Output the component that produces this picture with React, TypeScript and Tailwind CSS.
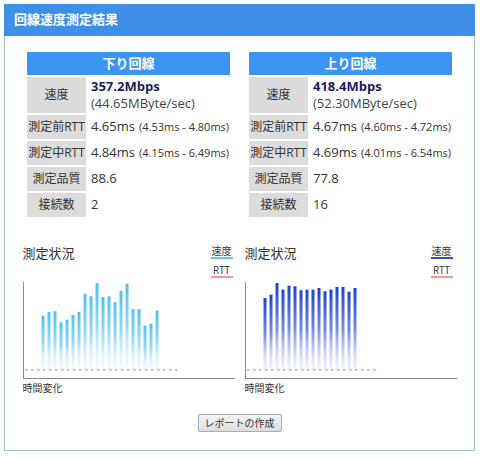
import React from "react";

const FONT = "'Open Sans', 'Noto Sans CJK JP', sans-serif";

type Side = {
  title: string;
  mbps: string;
  mbyte: string;
  rtt1: string;
  rtt1r: string;
  rtt2: string;
  rtt2r: string;
  quality: string;
  conn: string;
};

const down: Side = {
  title: "下り回線",
  mbps: "357.2Mbps",
  mbyte: "(44.65MByte/sec)",
  rtt1: "4.65ms",
  rtt1r: "(4.53ms - 4.80ms)",
  rtt2: "4.84ms",
  rtt2r: "(4.15ms - 6.49ms)",
  quality: "88.6",
  conn: "2",
};

const up: Side = {
  title: "上り回線",
  mbps: "418.4Mbps",
  mbyte: "(52.30MByte/sec)",
  rtt1: "4.67ms",
  rtt1r: "(4.60ms - 4.72ms)",
  rtt2: "4.69ms",
  rtt2r: "(4.01ms - 6.54ms)",
  quality: "77.8",
  conn: "16",
};

function Label({ children }: { children: React.ReactNode }) {
  return (
    <div className="w-[59px] shrink-0 bg-[#dcdcdc] flex items-center justify-center text-[12px] text-[#333] whitespace-nowrap overflow-visible">
      {children}
    </div>
  );
}

function Row({ label, children }: { label: string; children: React.ReactNode }) {
  return (
    <div className="flex h-[24px] gap-[2px]">
      <Label>{label}</Label>
      <div className="flex-1 flex items-center pl-[3px] text-[#333] whitespace-nowrap">{children}</div>
    </div>
  );
}

function Table({ s }: { s: Side }) {
  return (
    <div className="w-[203px] flex flex-col gap-[2px]">
      <div className="h-[23px] bg-[#3c95f2] text-white font-bold text-[13px] flex items-center justify-center">
        {s.title}
      </div>
      <div className="flex h-[36px] gap-[2px]">
        <Label>速度</Label>
        <div className="flex-1 flex flex-col justify-center pl-[3px] text-[13px] leading-[17px] whitespace-nowrap">
          <span className="font-bold text-[#1c1c5c]">{s.mbps}</span>
          <span className="text-[#444]">{s.mbyte}</span>
        </div>
      </div>
      <Row label="測定前RTT">
        <span className="text-[13px]">{s.rtt1}</span>
        <span className="text-[11px] ml-[4px]">{s.rtt1r}</span>
      </Row>
      <Row label="測定中RTT">
        <span className="text-[13px]">{s.rtt2}</span>
        <span className="text-[11px] ml-[4px]">{s.rtt2r}</span>
      </Row>
      <Row label="測定品質">
        <span className="text-[13px]">{s.quality}</span>
      </Row>
      <Row label="接続数">
        <span className="text-[13px]">{s.conn}</span>
      </Row>
    </div>
  );
}

function Chart({
  tops,
  id,
  top,
  bottom,
  legend,
  dashStart,
  dashEnd,
  legendPad,
}: {
  tops: number[];
  id: string;
  top: string;
  bottom: string;
  legend: string;
  dashStart: number;
  dashEnd: number;
  legendPad: string;
}) {
  return (
    <div className="w-[212px] flex flex-col">
      <div className="flex justify-between">
        <div className="text-[13px] leading-[16px] text-[#333]">測定状況</div>
        <div className={`flex flex-col items-end gap-[5px] ${legendPad}`}>
          <div
            className="w-[22px] text-center text-[10px] leading-[12px] text-[#333] border-b-2"
            style={{ borderColor: legend }}
          >
            速度
          </div>
          <div className="w-[22px] text-center text-[10px] leading-[12px] text-[#333] border-b-2 border-[#ec9a9a]">
            RTT
          </div>
        </div>
      </div>
      <svg width="212" height="98" className="mt-[4px] block">
        <defs>
          <linearGradient id={id} x1="0" y1="0" x2="0" y2="1">
            <stop offset="0" stopColor={top} />
            <stop offset="0.5" stopColor={top} stopOpacity="0.6" />
            <stop offset="1" stopColor={bottom} stopOpacity="0.15" />
          </linearGradient>
        </defs>
        {tops.map((t, i) => (
          <rect key={i} x={18.5 + 6 * i} y={t} width={3} height={88 - t} fill={`url(#${id})`} />
        ))}
        <line
          x1={dashStart}
          y1={87.7}
          x2={dashEnd}
          y2={87.7}
          stroke="#f09aa2"
          strokeWidth={1.6}
          strokeDasharray="2.5 3.5"
        />
        <line x1={0.5} y1={0} x2={0.5} y2={97} stroke="#8a8a8a" strokeWidth={1} />
        <line x1={0} y1={96.5} x2={212} y2={96.5} stroke="#8a8a8a" strokeWidth={1} />
      </svg>
      <div className="mt-[2px] text-[10px] leading-[12px] text-[#333]">時間変化</div>
    </div>
  );
}

const leftTops = [33.7, 30, 29.3, 40.3, 37.7, 33, 30, 11.7, 14.3, 1, 15, 14.3, 20.3, 8.7, 1.7, 27, 27, 43.7, 41.7, 28.7];
const rightTops = [16, 12.7, 1, 7.7, 3.7, 4.3, 8.3, 7.7, 7.7, 6, 9.3, 7.7, 5, 5, 9.7, 6];

export default function App() {
  return (
    <div className="bg-white w-[480px] h-[459px] pt-[4px] pl-[4px]" style={{ fontFamily: FONT }}>
      <div className="w-[471px] flex flex-col">
        <div className="h-[32px] bg-[#3f8fe9] text-white font-bold text-[13px] flex items-center pl-[10px]">
          回線速度測定結果
        </div>
        <div className="border-x border-b border-[#9dbdd3] pt-[16px] pb-[18px] flex flex-col items-center">
          <div className="flex justify-center gap-[19px]">
            <Table s={down} />
            <Table s={up} />
          </div>
          <div className="flex justify-center gap-[10px] mt-[28px]">
            <Chart
              tops={leftTops}
              id="gl"
              top="#4cc3ee"
              bottom="#bfeaf9"
              legend="#58cde8"
              dashStart={2}
              dashEnd={156}
              legendPad="pr-[2px]"
            />
            <Chart
              tops={rightTops}
              id="gr"
              top="#1d40d6"
              bottom="#9fb4f2"
              legend="#2a4fd0"
              dashStart={2}
              dashEnd={134}
              legendPad="pr-[4px]"
            />
          </div>
          <button className="mt-[20px] h-[18px] px-[6px] border border-[#adadad] rounded-[2px] bg-gradient-to-b from-[#f4f4f4] to-[#dedede] text-[10px] leading-[16px] text-[#333]">
            レポートの作成
          </button>
        </div>
      </div>
    </div>
  );
}
